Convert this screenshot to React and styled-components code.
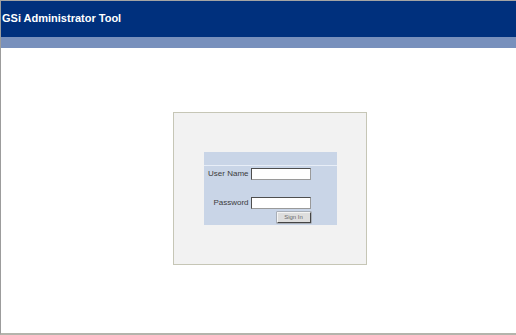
import React from 'react'
import styled, { createGlobalStyle } from 'styled-components'

/* Global reset */
const GlobalStyle = createGlobalStyle`
    html, body {
        margin: 0;
        padding: 0;
        background: #ffffff;
        font-family: "Liberation Sans", Arial, sans-serif;
    }
`

/* Window frame */
const Frame = styled.div`
    height: 335px;
    box-sizing: border-box;
    border-top: 1px solid #a4a4a4;
    border-left: 1px solid #9c9c9c;
    border-bottom: 2px solid #b4b4ac;
    display: flex;
    flex-direction: column;
    background: #ffffff;
`

/* Title bar */
const Header = styled.header`
    height: 36px;
    background: #00307d;
    color: #ffffff;
    font-weight: bold;
    font-size: 11px;
    display: flex;
    align-items: center;
    padding: 0 0 3px 1px;
    box-sizing: border-box;
`

const Band = styled.div`
    height: 11px;
    background: #7890bc;
`

/* Main area */
const Main = styled.main`
    flex: 1;
    padding: 64px 0 0 172px;
`

const Panel = styled.div`
    width: 194px;
    height: 153px;
    box-sizing: border-box;
    border: 1px solid #c6c6b6;
    background: #f2f2f2;
    display: flex;
    align-items: center;
    justify-content: center;
`

const LoginBox = styled.div`
    width: 133px;
    height: 73px;
    background: #c9d5e7;
    display: flex;
    flex-direction: column;
`

const BoxHead = styled.div`
    height: 13px;
    border-bottom: 1px solid #e8eef7;
`

const Form = styled.form`
    display: grid;
    grid-template-columns: 45px 60px;
    column-gap: 2px;
    padding-top: 2px;
    margin: 0;
`

const Label = styled.label`
    font-size: 8px;
    color: #3c3c3c;
    text-align: right;
    line-height: 12px;
    margin-top: ${(p) => p.top || 0}px;
    white-space: nowrap;
`

const Input = styled.input`
    width: 60px;
    height: 12px;
    box-sizing: border-box;
    margin: ${(p) => p.top || 0}px 0 0 0;
    padding: 0;
    background: #ffffff;
    border: 1px solid;
    border-color: #4e4e4e #9a9a9a #9a9a9a #4e4e4e;
    outline: none;
`

const Button = styled.button`
    grid-column: 2;
    justify-self: end;
    margin-top: 3px;
    width: 34px;
    height: 11px;
    padding: 0;
    box-sizing: border-box;
    background: #dedede;
    border: 1px solid;
    border-color: #f4f4f4 #444444 #444444 #f4f4f4;
    box-shadow: 0 0 0 0.5px #8a8a8a;
    font-family: "Liberation Sans", Arial, sans-serif;
    font-size: 6px;
    line-height: 9px;
    color: #6a6a6a;
`

function App() {
    return (
        <>
            <GlobalStyle />
            <Frame>
                <Header>GSi Administrator Tool</Header>
                <Band />
                <Main>
                    <Panel>
                        <LoginBox>
                            <BoxHead />
                            <Form onSubmit={(e) => e.preventDefault()}>
                                <Label>User Name</Label>
                                <Input type="text" />
                                <Label top={17}>Password</Label>
                                <Input type="password" top={17} />
                                <Button type="submit">Sign In</Button>
                            </Form>
                        </LoginBox>
                    </Panel>
                </Main>
            </Frame>
        </>
    )
}

export default App
